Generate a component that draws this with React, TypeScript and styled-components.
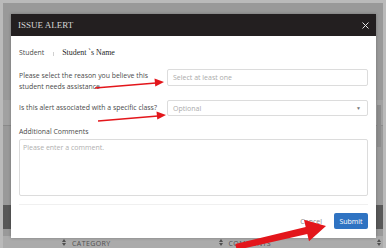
import React from "react";
import styled, { createGlobalStyle } from "styled-components";

const GlobalStyle = createGlobalStyle`
  html, body {
    margin: 0;
    padding: 0;
    overflow: hidden;
  }
  body {
    font-family: "Open Sans", "Liberation Sans", sans-serif;
  }
`;

const Frame = styled.div`
  position: relative;
  width: 386px;
  height: 248px;
  box-sizing: border-box;
  padding: 3px 3px 0 3px;
  background-color: #bababa;
  overflow: hidden;
`;

const Screen = styled.div`
  height: 100%;
  display: flex;
  flex-direction: column;
  background-color: #999999;
`;

const Spacer = styled.div<{ h: number }>`
  height: ${(p) => p.h}px;
  flex-shrink: 0;
`;

const RowBand = styled.div`
  height: 26px;
  background-color: #a1a1a1;
  border-bottom: 1px solid #8a8a8a;
`;

const DarkBand = styled.div`
  height: 25px;
  background-color: #585858;
`;

const ScrollThumb = styled.div`
  position: absolute;
  right: 5px;
  top: 105px;
  width: 4px;
  height: 42px;
  background-color: #8c8c8c;
`;

const HeadStrip = styled.div`
  flex: 1;
  display: flex;
  align-items: flex-start;
  padding-top: 3px;
  background-color: #ababab;
  color: #4f4f4f;
  font-size: 7px;
  letter-spacing: 0.4px;
`;

const HeadCell = styled.div<{ left: number }>`
  display: flex;
  gap: 6px;
  margin-left: ${(p) => p.left}px;
`;

const Modal = styled.div`
  position: absolute;
  left: 11px;
  top: 14px;
  width: 365px;
  height: 224px;
  display: flex;
  flex-direction: column;
  background-color: #ffffff;
  box-shadow: 0 0 3px rgba(0, 0, 0, 0.25);
`;

const Header = styled.div`
  height: 22px;
  display: flex;
  align-items: center;
  justify-content: space-between;
  padding: 0 7px 0 7px;
  background-color: #231f20;
`;

const Title = styled.div`
  font-family: "Liberation Serif", serif;
  font-size: 9px;
  color: #d6d6d6;
`;

const Body = styled.div`
  display: flex;
  flex-direction: column;
  padding: 10px 8px 0 8px;
  color: #4a4a4a;
  font-size: 6.9px;
`;

const StudentRow = styled.div`
  display: flex;
  align-items: center;
  height: 12px;
`;

const Label = styled.div`
  line-height: 11px;
`;

const Sep = styled.span`
  width: 1px;
  height: 4px;
  margin: 3px 8px 0 9px;
  background-color: #d0d0d0;
`;

const Name = styled.div`
  font-family: "Liberation Serif", serif;
  font-size: 7.9px;
  color: #1e1e1e;
`;

const FieldRow = styled.div<{ top: number }>`
  display: grid;
  grid-template-columns: 148px 1fr;
  align-items: start;
  margin-top: ${(p) => p.top}px;
`;

const FieldLabel = styled(Label)<{ pad: number }>`
  padding-top: ${(p) => p.pad}px;
`;

const Input = styled.div<{ h: number }>`
  height: ${(p) => p.h}px;
  box-sizing: border-box;
  display: flex;
  align-items: center;
  justify-content: space-between;
  padding: 0 6px 0 5px;
  border: 1px solid #dcdcdc;
  border-radius: 2px;
  color: #ababab;
  font-size: 7px;
`;

const Caret = styled.span`
  font-size: 5px;
  color: #777777;
`;

const CommentLabel = styled(Label)`
  margin-top: 10px;
`;

const TextArea = styled.div`
  height: 57px;
  box-sizing: border-box;
  margin-top: 2px;
  padding: 3px 3px;
  border: 1px solid #dcdcdc;
  border-radius: 2px;
  color: #b0b0b0;
  font-size: 7px;
  line-height: 10px;
`;

const Divider = styled.div`
  height: 1px;
  margin-top: 8px;
  background-color: #f0f0f0;
`;

const Footer = styled.div`
  display: flex;
  justify-content: flex-end;
  align-items: center;
  gap: 12px;
  margin-top: 8px;
`;

const CancelButton = styled.div`
  color: #8a8a8a;
  font-size: 7px;
`;

const SubmitButton = styled.div`
  width: 34px;
  height: 16px;
  display: flex;
  align-items: center;
  justify-content: center;
  border-radius: 2px;
  background-color: #2f73c2;
  color: #ffffff;
  font-size: 7px;
`;

const Annotations = styled.svg`
  position: absolute;
  left: 0;
  top: 0;
  pointer-events: none;
`;

const SortIcon = () => (
  <svg width="4" height="7" viewBox="0 0 4 7">
    <path d="M2 0 L4 3 L0 3 Z M2 7 L4 4 L0 4 Z" fill="#4f4f4f" />
  </svg>
);

const CloseIcon = () => (
  <svg width="7" height="7" viewBox="0 0 7 7">
    <path d="M0.5 0.5 L6.5 6.5 M6.5 0.5 L0.5 6.5" stroke="#e6e6e6" strokeWidth="1" />
  </svg>
);

const App = (): JSX.Element => {
  return (
    <Frame>
      <GlobalStyle />
      <Screen>
        <Spacer h={97} />
        <RowBand />
        <Spacer h={79} />
        <DarkBand />
        <Spacer h={7} />
        <HeadStrip>
          <HeadCell left={59}>
            <SortIcon />
            CATEGORY
          </HeadCell>
          <HeadCell left={108}>
            <SortIcon />
            COMMENTS
          </HeadCell>
          <HeadCell left={106}>
            <SortIcon />
          </HeadCell>
        </HeadStrip>
      </Screen>
      <ScrollThumb />

      <Modal>
        <Header>
          <Title>ISSUE ALERT</Title>
          <CloseIcon />
        </Header>
        <Body>
          <StudentRow>
            <Label>Student</Label>
            <Sep />
            <Name>Student `s Name</Name>
          </StudentRow>

          <FieldRow top={11}>
            <FieldLabel pad={1}>
              Please select the reason you believe this
              <br />
              student needs assistance
            </FieldLabel>
            <Input h={17}>Select at least one</Input>
          </FieldRow>

          <FieldRow top={8}>
            <FieldLabel pad={2}>
              Is this alert associated with a specific class?
            </FieldLabel>
            <Input h={16}>
              Optional
              <Caret>▼</Caret>
            </Input>
          </FieldRow>

          <CommentLabel>Additional Comments</CommentLabel>
          <TextArea>Please enter a comment.</TextArea>
          <Divider />

          <Footer>
            <CancelButton>Cancel</CancelButton>
            <SubmitButton>Submit</SubmitButton>
          </Footer>
        </Body>
      </Modal>

      <Annotations width="386" height="248" viewBox="0 0 386 248">
        <g fill="#e3161b" stroke="#e3161b">
          <line x1="95" y1="88" x2="156" y2="83" strokeWidth="1.4" />
          <polygon points="164,82 154.5,78.6 155.3,86.4" stroke="none" />
          <line x1="98" y1="121" x2="158" y2="116" strokeWidth="1.4" />
          <polygon points="166,115 156.5,111.6 157.3,119.4" stroke="none" />
          <polygon
            points="236.7,250 235.3,244 305.7,227.1 304,219.8 326,226 309,241.2 307.3,233.9"
            stroke="none"
          />
        </g>
      </Annotations>
    </Frame>
  );
};

export default App;
